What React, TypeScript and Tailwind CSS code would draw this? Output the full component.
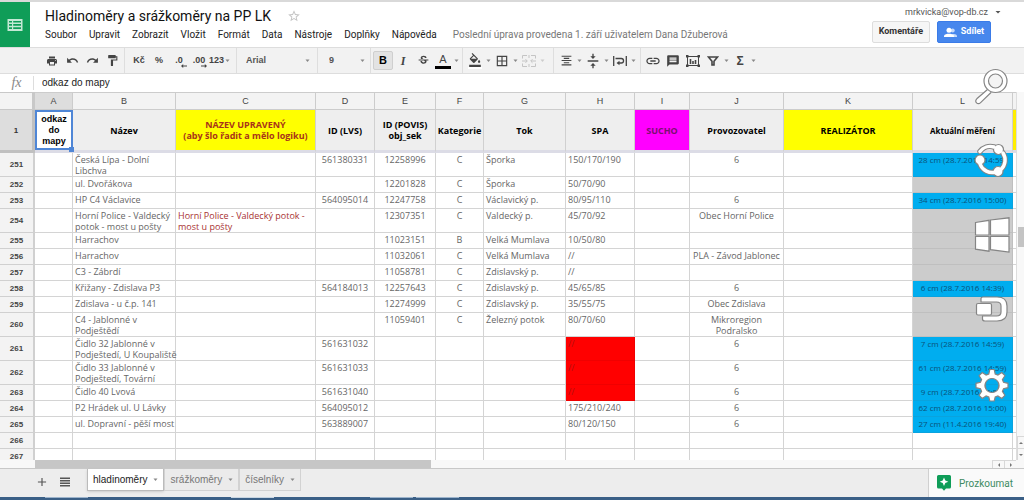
import type { ReactNode } from "react";
import {
  MdAdd,
  MdArrowDropDown,
  MdBorderAll,
  MdFormatAlignCenter,
  MdFormatColorFill,
  MdFormatPaint,
  MdInsertComment,
  MdLink,
  MdPrint,
  MdRedo,
  MdStarBorder,
  MdStrikethroughS,
  MdUndo,
  MdVerticalAlignCenter,
} from "react-icons/md";

type Status = "blue" | "gray" | "none";

interface Row {
  n: number;
  name?: string;
  edited?: string;
  lvs?: string;
  povis?: string;
  cat?: string;
  stream?: string;
  spa?: string;
  alert?: boolean;
  operator?: string;
  measured?: string;
  status: Status;
}

const rows: Row[] = [
  { n: 251, name: "Česká Lípa - Dolní\nLibchva", lvs: "561380331", povis: "12258996", cat: "C", stream: "Šporka", spa: "150/170/190", operator: "6", measured: "28 cm (28.7.2016 14:59)", status: "blue" },
  { n: 252, name: "ul. Dvořákova", povis: "12201828", cat: "C", stream: "Šporka", spa: "50/70/90", status: "gray" },
  { n: 253, name: "HP C4 Václavice", lvs: "564095014", povis: "12247758", cat: "C", stream: "Václavický p.", spa: "80/95/110", operator: "6", measured: "34 cm (28.7.2016 15:00)", status: "blue" },
  { n: 254, name: "Horní Police - Valdecký\npotok - most u pošty", edited: "Horní Police - Valdecký potok - most u pošty", povis: "12307351", cat: "C", stream: "Valdecký p.", spa: "45/70/92", operator: "Obec Horní Police", status: "gray" },
  { n: 255, name: "Harrachov", povis: "11023151", cat: "B", stream: "Velká Mumlava", spa: "10/50/80", status: "gray" },
  { n: 256, name: "Harrachov", povis: "11032061", cat: "C", stream: "Velká Mumlava", spa: "//", operator: "PLA - Závod Jablonec", status: "gray" },
  { n: 257, name: "C3 - Zábrdí", povis: "11058781", cat: "C", stream: "Zdislavský p.", spa: "//", status: "gray" },
  { n: 258, name: "Křižany - Zdislava P3", lvs: "564184013", povis: "12257643", cat: "C", stream: "Zdislavský p.", spa: "45/65/85", operator: "6", measured: "6 cm (28.7.2016 14:39)", status: "blue" },
  { n: 259, name: "Zdislava - u č.p. 141", povis: "12274999", cat: "C", stream: "Zdislavský p.", spa: "35/55/75", operator: "Obec Zdislava", status: "gray" },
  { n: 260, name: "C4 - Jablonné v\nPodještědí", povis: "11059401", cat: "C", stream: "Železný potok", spa: "80/70/60", operator: "Mikroregion Podralsko", status: "gray" },
  { n: 261, name: "Čidlo 32 Jablonné v\nPodještedí, U Koupaliště", lvs: "561631032", spa: "//", alert: true, operator: "6", measured: "7 cm (28.7.2016 14:59)", status: "blue" },
  { n: 262, name: "Čidlo 33 Jablonné v\nPodještedí, Tovární", lvs: "561631033", spa: "//", alert: true, operator: "6", measured: "61 cm (28.7.2016 14:59)", status: "blue" },
  { n: 263, name: "Čidlo 40 Lvová", lvs: "561631040", spa: "//", alert: true, operator: "6", measured: "9 cm (28.7.2016 14:59)", status: "blue" },
  { n: 264, name: "P2 Hrádek ul. U Lávky", lvs: "564095012", spa: "175/210/240", operator: "6", measured: "62 cm (28.7.2016 15:00)", status: "blue" },
  { n: 265, name: "ul. Dopravní - pěší most", lvs: "563889007", spa: "80/120/150", operator: "6", measured: "27 cm (11.4.2016 19:40)", status: "blue" },
  { n: 266, status: "none" },
  { n: 267, status: "none" },
];

const menus = ["Soubor", "Upravit", "Zobrazit", "Vložit", "Formát", "Data", "Nástroje", "Doplňky", "Nápověda"];
const letters = ["A", "B", "C", "D", "E", "F", "G", "H", "I", "J", "K", "L"];

const measuredStyle: Record<Status, string> = {
  blue: "bg-[#00adef] border-[#0aa3de]",
  gray: "bg-[#cccccc] border-[#bfbfbf]",
  none: "border-[#d4d4d4]",
};

function Tool({ label, children, active }: { label: string; children: ReactNode; active?: boolean }) {
  return (
    <button
      type="button"
      aria-label={label}
      className={`flex h-[19px] w-5 shrink-0 items-center justify-center text-[9px] font-bold ${
        active ? "rounded-[2px] border border-[#cfcfcf] bg-[#e3e3e3] text-black" : ""
      }`}
    >
      {children}
    </button>
  );
}

function Caret({ faded }: { faded?: boolean }) {
  return (
    <svg viewBox="0 0 7 4" className={`h-1 w-[7px] shrink-0 ${faded ? "text-[#cccccc]" : "text-[#888888]"}`}>
      <path d="M1.5 0.5h4L3.5 3z" fill="currentColor" />
    </svg>
  );
}

function Divider() {
  return <span className="mx-[2px] h-full w-px shrink-0 bg-[#dedede]" />;
}

function Header() {
  return (
    <header className="flex h-[47px] shrink-0 border-t-2 border-[#d9d9d9] bg-white font-[Roboto,sans-serif]">
      <a href="#home" aria-label="Tabulky" className="flex w-[30px] shrink-0 items-center justify-center bg-[#0f9d58]">
        <svg viewBox="0 0 16 14" className="h-[14px] w-4">
          <path d="M0.5 1h15v12h-15z" fill="#c4e8d5" />
          <path d="M2 3h3v1.6H2zM6.2 3H14v1.6H6.2zM2 6.1h3v1.6H2zM6.2 6.1H14v1.6H6.2zM2 9.3h3v1.7H2zM6.2 9.3H14v1.7H6.2z" fill="#0f9d58" />
        </svg>
      </a>
      <div className="flex min-w-0 flex-1 flex-col pl-[15px] pt-1">
        <div className="flex items-center">
          <h1 className="text-[14px] leading-5 text-[#111111]">Hladinoměry a srážkoměry na PP LK</h1>
          <button type="button" aria-label="Přidat hvězdičku" className="ml-4">
            <MdStarBorder className="size-[14px] text-[#c4c4c4]" />
          </button>
        </div>
        <nav className="flex items-center gap-3 whitespace-nowrap text-[10px] leading-[18px] text-[#222222]">
          {menus.map((m) => (
            <button key={m} type="button">
              {m}
            </button>
          ))}
          <a href="#history" className="ml-1 text-[#777777]">
            Poslední úprava provedena 1. září uživatelem Dana Džuberová
          </a>
        </nav>
      </div>
      <div className="flex shrink-0 flex-col items-end pt-1">
        <button type="button" className="mr-5 flex items-center gap-1 text-[9px] leading-3 text-[#555555]">
          mrkvicka@vop-db.cz
          <MdArrowDropDown className="size-3" />
        </button>
        <div className="mr-[33px] mt-[3px] flex gap-[7px]">
          <button type="button" className="h-[22px] rounded-[2px] border border-[#dddddd] bg-[#f6f6f6] px-[6px] text-[9px] font-bold text-[#333333]">
            Komentáře
          </button>
          <button type="button" className="flex h-[22px] w-[54px] items-center justify-center gap-1 rounded-[2px] border border-[#3a7be8] bg-[#4787ed] text-[9px] font-bold text-white">
            <svg viewBox="0 0 13 11" className="h-[11px] w-[13px]">
              <circle cx="8.7" cy="3.6" r="2" fill="#c5dafa" />
              <path d="M8 10V7.4c2.500-1 4.500.1 5 1.300V10z" fill="#c5dafa" />
              <circle cx="5" cy="3.200" r="2.500" fill="white" />
              <path d="M0 10V8.600C1.300 6 8.700 6 10 8.600V10z" fill="white" />
            </svg>
            Sdílet
          </button>
        </div>
      </div>
    </header>
  );
}

function Toolbar() {
  return (
    <div role="toolbar" className="flex h-[27px] shrink-0 items-center overflow-hidden border-y border-[#dddddd] bg-[#f2f2f2] pl-[42px] text-[#444444]">
      <Tool label="Tisk"><MdPrint className="size-3" /></Tool>
      <Tool label="Zpět"><MdUndo className="size-[13px]" /></Tool>
      <Tool label="Znovu"><MdRedo className="size-[13px]" /></Tool>
      <Tool label="Kopírovat formát"><MdFormatPaint className="size-[13px]" /></Tool>
      <Divider />
      <div className="flex items-center pl-[2px]">
        <Tool label="Formát měny">Kč</Tool>
        <Tool label="Formát procent">%</Tool>
        <Tool label="Méně desetinných míst">
          <span className="relative">
            .0
            <svg viewBox="0 0 6 4" className="absolute -bottom-px left-[6px] h-1 w-[6px]">
              <path d="M0 2l2.200-2v1.500H6v1H2.200V4z" fill="#444444" />
            </svg>
          </span>
        </Tool>
        <Tool label="Více desetinných míst">
          <span className="relative">
            .00
            <svg viewBox="0 0 6 4" className="absolute -bottom-px left-2 h-1 w-[6px]">
              <path d="M6 2L3.800 0v1.500H0v1h3.800V4z" fill="#444444" />
            </svg>
          </span>
        </Tool>
        <button type="button" className="flex items-center text-[9px] font-bold">
          123
          <Caret />
        </button>
      </div>
      <span className="w-[3px] shrink-0" />
      <Divider />
      <label className="flex w-[76px] shrink-0 items-center pl-[7px]">
        <select aria-label="Písmo" className="w-[58px] appearance-none bg-transparent text-[9px] font-bold text-[#555555]">
          <option>Arial</option>
        </select>
        <Caret />
      </label>
      <Divider />
      <label className="flex w-[48px] shrink-0 items-center pl-[9px]">
        <select aria-label="Velikost písma" className="w-[30px] appearance-none bg-transparent text-[9px] font-bold text-[#555555]">
          <option>9</option>
        </select>
        <Caret />
      </label>
      <Divider />
      <Tool label="Tučné" active><span className="text-[11px]">B</span></Tool>
      <Tool label="Kurzíva"><span className="font-['Liberation_Serif'] text-[12px] italic">I</span></Tool>
      <Tool label="Přeškrtnuté"><MdStrikethroughS className="size-[13px]" /></Tool>
      <Tool label="Barva textu">
        <span className="w-4 border-b-[3px] border-black text-center text-[11px] leading-[13px] font-normal">A</span>
      </Tool>
      <Caret />
      <Divider />
      <Tool label="Barva výplně">
        <span className="border-b-2 border-white"><MdFormatColorFill className="size-[14px]" /></span>
      </Tool>
      <Caret />
      <Tool label="Ohraničení"><MdBorderAll className="size-[14px]" /></Tool>
      <Caret />
      <Tool label="Sloučit buňky">
        <svg viewBox="0 0 14 12" className="h-3 w-[14px]" fill="none" stroke="#c4c4c4">
          <path d="M5 .5H.5v3M9 .5h4.500v3M5 11.500H.5v-3M9 11.500h4.500v-3M0 6h5M14 6H9M3.500 4.200L5.300 6 3.500 7.800M10.500 4.200L8.700 6l1.800 1.800M7 0v3M7 9v3" />
        </svg>
      </Tool>
      <Caret faded />
      <span className="w-[5px] shrink-0" />
      <Divider />
      <Tool label="Zarovnat vodorovně"><MdFormatAlignCenter className="size-[13px]" /></Tool>
      <Caret />
      <Tool label="Zarovnat svisle"><MdVerticalAlignCenter className="size-4" /></Tool>
      <Caret />
      <Tool label="Zalamování textu">
        <svg viewBox="0 0 14 12" className="h-3 w-[14px]" fill="none" stroke="#444444" strokeWidth="1.300">
          <path d="M.7 1v10M13.300 1v10M2.500 3.500h5.800c3 0 3 4.500 0 4.500H5" />
          <path d="M6.500 5.800L3.500 8l3 2.300z" fill="#444444" stroke="none" />
        </svg>
      </Tool>
      <Caret />
      <span className="w-px shrink-0" />
      <Divider />
      <Tool label="Vložit odkaz"><MdLink className="size-4" /></Tool>
      <Tool label="Vložit komentář"><MdInsertComment className="size-[14px] -scale-x-100" /></Tool>
      <Tool label="Vložit graf">
        <svg viewBox="0 0 14 12" className="h-3 w-[14px]" fill="none" stroke="#444444">
          <path d="M1.500 1.500h11v9h-11z" />
          <path d="M4.500 9V4M7 9V6M9.500 9V5" strokeWidth="1.600" />
          <path d="M0 0h2.500v2.500H0zM11.500 0H14v2.500h-2.500zM0 9.500h2.500V12H0zM11.500 9.500H14V12h-2.500z" fill="#444444" stroke="none" />
        </svg>
      </Tool>
      <Tool label="Filtr">
        <svg viewBox="0 0 12 10" className="h-[10px] w-3" fill="none" stroke="#444444" strokeWidth="1.600">
          <path d="M1.500 1h9L7 5.200V9H5V5.200z" />
        </svg>
      </Tool>
      <Caret />
      <Tool label="Funkce"><span className="text-[12px]">Σ</span></Tool>
      <Caret />
    </div>
  );
}

function FormulaBar() {
  return (
    <div className="flex h-[18px] shrink-0 items-center bg-white">
      <label htmlFor="formula" className="w-[34px] shrink-0 border-r border-[#dddddd] text-center font-['Liberation_Serif'] text-[14px] leading-[14px] text-[#888888] italic">
        fx
      </label>
      <input id="formula" defaultValue="odkaz do mapy" className="min-w-0 flex-1 pl-2 text-[10px] leading-4 text-[#222222] outline-none" />
    </div>
  );
}

const headCell = "border-r border-b-[3px] border-r-[#d0d0d0] border-b-[#dcdce6] bg-[#eeeeee] p-0 text-center font-bold";
const cell = "border-r border-b border-[#d4d4d4] p-0 pt-px align-top";

function Sheet() {
  return (
    <table className="w-full table-fixed border-separate border-spacing-0 font-['Open_Sans',sans-serif] text-[9px] leading-[11px] text-[#666666]">
      <colgroup>
        <col className="w-[35px]" />
        <col className="w-[38px]" />
        <col className="w-[103px]" />
        <col className="w-[140px]" />
        <col className="w-[59px]" />
        <col className="w-[61px]" />
        <col className="w-[48px]" />
        <col className="w-[82px]" />
        <col className="w-[69px]" />
        <col className="w-[55px]" />
        <col className="w-[94px]" />
        <col />
        <col className="w-[100px]" />
        <col className="w-[3px]" />
      </colgroup>
      <thead className="text-black">
        <tr className="h-[18px] font-['Liberation_Sans',sans-serif] text-[#444444]">
          <td className="border-y border-r-[3px] border-[#c8c8c8] bg-[#f3f3f3] p-0" />
          {letters.map((l) => (
            <th
              key={l}
              scope="col"
              className={`border-y border-r border-[#cccccc] p-0 font-normal ${l === "A" ? "bg-[#dddddd]" : "bg-[#f3f3f3]"}`}
            >
              {l}
            </th>
          ))}
          <td className="border-y border-[#cccccc] bg-[#f3f3f3] p-0" />
        </tr>
        <tr className="h-[43px]">
          <th scope="row" className="border-r-[3px] border-b-[3px] border-[#c0c0c0] bg-[#dddddd] p-0 font-['Liberation_Sans',sans-serif] text-[8px] text-[#333333]">
            1
          </th>
          <th className="relative border-b-[3px] border-b-[#dcdce6] bg-white p-0 font-['Liberation_Sans',sans-serif] text-[9px] leading-[11px]">
            <div className="flex h-10 items-center justify-center border-2 border-[#4f86d6] px-1">odkaz do mapy</div>
            <span className="absolute -right-px bottom-[-2px] size-[5px] bg-[#4f86d6]" />
          </th>
          <th className={headCell}>Název</th>
          <th className="border-r border-b-[3px] border-r-[#d0d0d0] border-b-[#dcdce6] bg-[#ffff00] p-0 font-bold text-[#a8321a]">
            NÁZEV UPRAVENÝ
            <br />
            (aby šlo řadit a mělo logiku)
          </th>
          <th className={headCell}>ID (LVS)</th>
          <th className={headCell}>
            ID (POVIS)
            <br />
            obj_sek
          </th>
          <th className={headCell}>
            <div className="flex justify-center whitespace-nowrap">Kategorie</div>
          </th>
          <th className={headCell}>Tok</th>
          <th className={headCell}>SPA</th>
          <th className="border-r border-b-[3px] border-r-[#d0d0d0] border-b-[#dcdce6] bg-[#ff00ff] p-0 font-bold text-[#7a1070]">SUCHO</th>
          <th className={headCell}>Provozovatel</th>
          <th className="border-r border-b-[3px] border-r-[#d0d0d0] border-b-[#dcdce6] bg-[#ffff00] p-0 font-bold">REALIZÁTOR</th>
          <th className={headCell}><span className="text-[8px]">Aktuální měření</span></th>
          <td className="border-b-[3px] border-[#dcdce6] bg-[#ffee00] p-0" />
        </tr>
      </thead>
      <tbody>
        {rows.map((r) => (
          <tr key={r.n} className="h-4">
            <th scope="row" className="border-r-2 border-b border-[#d0d0d0] bg-[#f3f3f3] p-0 font-['Liberation_Sans',sans-serif] text-[8px] font-bold text-[#444444]">
              {r.n}
            </th>
            <td className={cell} />
            <td className={`${cell} pl-[2px] whitespace-pre`}>{r.name}</td>
            <td className={`${cell} pr-2 pl-[2px] text-[#a83232]`}>{r.edited}</td>
            <td className={`${cell} text-center`}>{r.lvs}</td>
            <td className={`${cell} text-center`}>{r.povis}</td>
            <td className={`${cell} text-center`}>{r.cat}</td>
            <td className={`${cell} pl-[2px] whitespace-nowrap`}>{r.stream}</td>
            <td
              className={
                r.alert
                  ? "border-r border-b border-[#f00000] bg-[#ff0000] p-0 pt-px pl-[2px] align-top text-[#b01010]"
                  : `${cell} pl-[2px]`
              }
            >
              {r.spa}
            </td>
            <td className={cell} />
            <td className={`${cell} text-center`}>{r.operator}</td>
            <td className={cell} />
            <td className={`border-r border-b p-0 pt-px text-center align-top text-[8px] whitespace-nowrap text-[#0b5279] ${measuredStyle[r.status]}`}>
              {r.measured}
            </td>
            <td className="border-b border-[#d4d4d4] p-0" />
          </tr>
        ))}
      </tbody>
    </table>
  );
}

// Windows charms column floating over the right side of the sheet
function Charms() {
  return (
    <svg viewBox="0 0 40 340" className="pointer-events-none absolute top-[-27px] right-3 h-[340px] w-10" fill="white" stroke="#858585" strokeWidth="1.200">
      {/* search */}
      <path d="M15.500 24.500L4.800 33.800c-3 3 1 6.600 3.800 3.800L19 27.500" />
      <circle cx="23.500" cy="16" r="11.500" />
      <circle cx="23.500" cy="16" r="7" fill="#f4f4f4" />
      {/* share */}
      <g strokeLinecap="round" fill="none">
        <g stroke="#858585" strokeWidth="5.500">
          <path d="M8 86.500A13 13 0 0 1 22 82" />
          <path d="M31 88A13 13 0 0 1 29 104.500" />
          <path d="M24 107A13 13 0 0 1 8 99" />
        </g>
        <g fill="white">
          <circle cx="26.500" cy="84.500" r="5" />
          <circle cx="8" cy="95" r="5" />
          <circle cx="26" cy="106.500" r="5" />
        </g>
        <g stroke="white" strokeWidth="3.500">
          <path d="M8 86.500A13 13 0 0 1 22 82" />
          <path d="M31 88A13 13 0 0 1 29 104.500" />
          <path d="M24 107A13 13 0 0 1 8 99" />
        </g>
      </g>
      {/* start */}
      <path d="M3.500 157.500L17 155.300v14.700H3.500zM18.500 155L37 152.800V170H18.500zM3.500 171.500H17v14.700l-13.500-2zM18.500 171.500H37V187l-18.500-2.300z" />
      {/* devices */}
      <path d="M9 237v-3.500q0-1.500 2-1.500h14q10 0 10 9v6q0 9-10 9H13q-2.500 0-2.500-2v-3h14q4.500 0 4.500-4v-6q0-4-4.500-4z" />
      <rect x="4.500" y="238.500" width="15" height="11.500" rx="1.500" />
      {/* settings */}
      <path
        fillRule="evenodd"
        d="M16.800 309l1 -4.500h4.400l1 4.500l2.700 1.100l3.900-2.500l3.100 3.100l-2.500 3.900l1.100 2.700l4.500 1v4.400l-4.500 1l-1.100 2.700l2.500 3.900l-3.100 3.100l-3.900-2.500l-2.700 1.100l-1 4h-4.400l-1-4l-2.700-1.100l-3.900 2.500l-3.100-3.100l2.500-3.900l-1.100-2.700l-4.500-1v-4.400l4.500-1l1.100-2.700l-2.500-3.900l3.100-3.100l3.900 2.500zM20 313.500a7 7 0 1 0 .01 0z"
      />
    </svg>
  );
}

function Arrow({ label, d }: { label: string; d: string }) {
  return (
    <button type="button" aria-label={label} className="flex flex-1 items-center justify-center border-t border-l border-[#d8d8d8] bg-[#f8f8f8]">
      <svg viewBox="0 0 4 4" className="size-1">
        <path d={d} fill="#777777" />
      </svg>
    </button>
  );
}

function SheetTab({ name, active }: { name: string; active?: boolean }) {
  return (
    <button
      type="button"
      className={`flex h-[22px] items-center gap-[5px] border border-t-0 pr-1 pl-[5px] text-[10px] ${
        active ? "border-[#bbbbbb] bg-white text-[#222222] shadow-sm" : "border-[#d2d2d2] bg-[#ebebeb] text-[#777777]"
      }`}
    >
      {name}
      <Caret />
    </button>
  );
}

function BottomBar() {
  return (
    <footer className="flex h-[29px] shrink-0 border-t border-[#c8c8c8] bg-[#ededed]">
      <div className="flex flex-1 items-start">
        <button type="button" aria-label="Přidat list" className="mt-[6px] ml-[35px] text-[#555555]">
          <MdAdd className="size-[14px]" />
        </button>
        <button type="button" aria-label="Všechny listy" className="mt-2 ml-[11px]">
          <svg viewBox="0 0 10 10" className="size-[10px]">
            <path d="M0 .5h10v1.500H0zM0 3h10v1.500H0zM0 5.500h10V7H0zM0 8h10v1.500H0z" fill="#555555" />
          </svg>
        </button>
        <div className="ml-[17px] flex">
          <SheetTab name="hladinoměry" active />
          <SheetTab name="srážkoměry" />
          <SheetTab name="číselníky" />
        </div>
      </div>
      <button type="button" className="flex w-24 items-center gap-2 border-l border-[#d0d0d0] bg-[#fafafa] pl-2 font-[Roboto,sans-serif] text-[10px] text-[#3d8a62]">
        <svg viewBox="0 0 14 16" className="h-4 w-[14px]">
          <path d="M1.500 0h11Q14 0 14 1.500v10.500q0 1.500-1.500 1.500H9L7 15.800 5 13.500H1.500Q0 13.500 0 12V1.500Q0 0 1.500 0z" fill="#0f9d58" />
          <path d="M7 2.500l1.300 3 3 1.300-3 1.300L7 11 5.700 8.100l-3-1.300 3-1.300z" fill="white" />
        </svg>
        Prozkoumat
      </button>
    </footer>
  );
}

export default function App() {
  return (
    <div className="flex h-screen w-full flex-col overflow-hidden bg-white font-['Liberation_Sans',sans-serif]">
      <Header />
      <Toolbar />
      <FormulaBar />
      <main className="relative flex min-h-0 flex-1">
        <div className="min-w-0 flex-1 overflow-hidden">
          <Sheet />
        </div>
        <div className="flex w-2 shrink-0 flex-col border-l border-[#dddddd] bg-[#f8f8f8]">
          <div className="flex-[135]" />
          <div className="ml-px h-5 bg-[#c4c4c4]" />
          <div className="flex-[188]" />
          <div className="flex h-6 flex-col">
            <Arrow label="Nahoru" d="M0 3l2-2 2 2z" />
            <Arrow label="Dolů" d="M0 1l2 2 2-2z" />
          </div>
        </div>
        <Charms />
      </main>
      <div className="flex h-2 shrink-0 bg-[#f8f8f8]">
        <div className="ml-[35px] w-[396px] bg-[#c6c6c6]" />
        <div className="flex-1" />
        <div className="mr-2 flex w-6">
          <Arrow label="Vlevo" d="M3 0L1 2l2 2z" />
          <Arrow label="Vpravo" d="M1 0l2 2-2 2z" />
        </div>
      </div>
      <BottomBar />
      <div className="flex h-[3px] shrink-0 bg-[#3a5f86]">
        <span className="ml-[45px] h-px w-[43px] bg-[#9db4cc]" />
        <span className="ml-[143px] h-px w-[43px] bg-[#c9d6e2]" />
        <span className="ml-24 h-px w-[43px] bg-[#9db4cc]" />
        <span className="ml-[3px] h-px w-[43px] bg-[#9db4cc]" />
      </div>
    </div>
  );
}
